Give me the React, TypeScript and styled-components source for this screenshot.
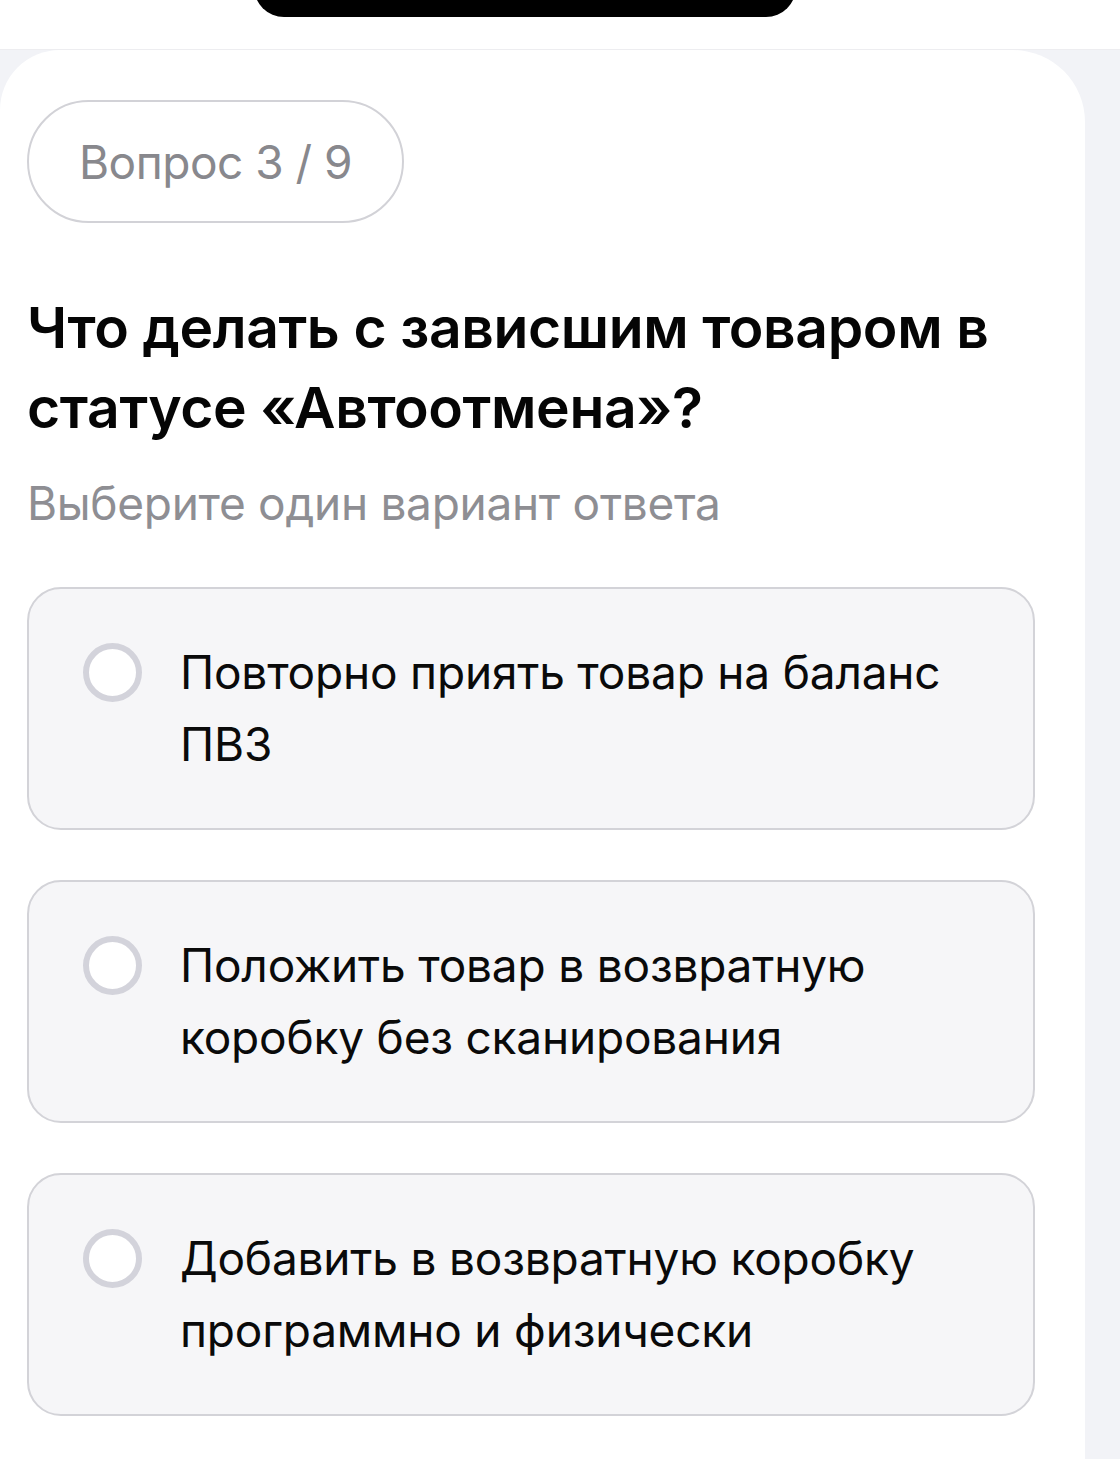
import React from "react";
import styled, { createGlobalStyle } from "styled-components";

const Global = createGlobalStyle`
  html, body { margin: 0; padding: 0; }
  body {
    background: #f2f3f7;
    font-family: Inter, "Noto Sans", "Liberation Sans", sans-serif;
    -webkit-font-smoothing: antialiased;
  }
`;

const Page = styled.div`
  width: 1120px;
  min-height: 1459px;
  display: flex;
  flex-direction: column;
  background: #f2f3f7;
  overflow: hidden;
`;

const TopBar = styled.header`
  height: 50px;
  background: #ffffff;
  border-bottom: 1px solid #ededf0;
  box-sizing: border-box;
  display: flex;
  justify-content: center;
  overflow: hidden;
  padding-right: 70px;
`;

const Notch = styled.div`
  width: 542px;
  height: 60px;
  margin-top: -43px;
  background: #000;
  border-radius: 42px;
`;

const Card = styled.main`
  width: 1085px;
  flex: 1;
  background: #ffffff;
  border-radius: 60px 72px 0 0;
  box-sizing: border-box;
  padding: 50px 50px 40px 27px;
  display: flex;
  flex-direction: column;
`;

const Counter = styled.div`
  align-self: flex-start;
  height: 123px;
  box-sizing: border-box;
  padding: 0 50px;
  border: 2px solid #d2d2d7;
  border-radius: 62px;
  display: flex;
  align-items: center;
  font-size: 46px;
  color: #88888d;
  letter-spacing: -0.5px;
`;

const Title = styled.h1`
  margin: 65px 0 0;
  font-size: 57px;
  line-height: 80px;
  font-weight: 600;
  color: #050505;
  letter-spacing: -0.4px;
`;

const Hint = styled.p`
  margin: 25px 0 0;
  font-size: 46px;
  line-height: 60px;
  color: #8e8e93;
  letter-spacing: -0.3px;
`;

const Options = styled.div`
  margin-top: 54px;
  display: flex;
  flex-direction: column;
  gap: 50px;
`;

const Option = styled.label`
  display: flex;
  align-items: flex-start;
  gap: 38px;
  box-sizing: border-box;
  height: 243px;
  padding: 47px 60px 0 54px;
  background: #f6f6f8;
  border: 2px solid #d3d3d8;
  border-radius: 34px;
  cursor: pointer;
`;

const Radio = styled.span`
  flex: none;
  width: 59px;
  height: 59px;
  margin-top: 7px;
  box-sizing: border-box;
  border: 6px solid #d3d3db;
  border-radius: 50%;
  background: #ffffff;
`;

const OptionText = styled.span`
  font-size: 46px;
  line-height: 72px;
  color: #0a0a0a;
  letter-spacing: -0.2px;
`;

const answers = [
  "Повторно приять товар на баланс ПВЗ",
  "Положить товар в возвратную коробку без сканирования",
  "Добавить в возвратную коробку программно и физически",
];

export default function App() {
  return (
    <>
      <Global />
      <Page>
        <TopBar>
          <Notch />
        </TopBar>
        <Card>
          <Counter>Вопрос 3 / 9</Counter>
          <Title>Что делать с зависшим товаром в статусе «Автоотмена»?</Title>
          <Hint>Выберите один вариант ответа</Hint>
          <Options>
            {answers.map((a) => (
              <Option key={a}>
                <Radio />
                <OptionText>{a}</OptionText>
              </Option>
            ))}
          </Options>
        </Card>
      </Page>
    </>
  );
}
